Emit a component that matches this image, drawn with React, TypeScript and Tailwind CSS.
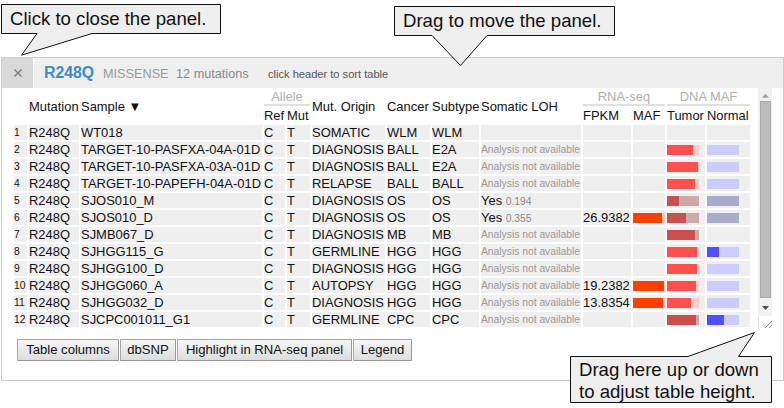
import React from "react";

type Bar = [number, boolean?];
interface Row {
  sample: string;
  origin: string;
  cancer: string;
  subtype: string;
  loh?: string;
  fpkm?: string;
  maf?: number;
  tumor?: Bar;
  normal?: Bar;
}

const rows: Row[] = [
  { sample: "WT018", origin: "SOMATIC", cancer: "WLM", subtype: "WLM", loh: "" },
  { sample: "TARGET-10-PASFXA-04A-01D", origin: "DIAGNOSIS", cancer: "BALL", subtype: "E2A", tumor: [26], normal: [0] },
  { sample: "TARGET-10-PASFXA-03A-01D", origin: "DIAGNOSIS", cancer: "BALL", subtype: "E2A", tumor: [31], normal: [0] },
  { sample: "TARGET-10-PAPEFH-04A-01D", origin: "RELAPSE", cancer: "BALL", subtype: "BALL", tumor: [28], normal: [0] },
  { sample: "SJOS010_M", origin: "DIAGNOSIS", cancer: "OS", subtype: "OS", loh: "0.194", tumor: [12, true], normal: [0, true] },
  { sample: "SJOS010_D", origin: "DIAGNOSIS", cancer: "OS", subtype: "OS", loh: "0.355", fpkm: "26.9382", maf: 29, tumor: [19, true], normal: [0, true] },
  { sample: "SJMB067_D", origin: "DIAGNOSIS", cancer: "MB", subtype: "MB", tumor: [28, true] },
  { sample: "SJHGG115_G", origin: "GERMLINE", cancer: "HGG", subtype: "HGG", tumor: [30], normal: [12] },
  { sample: "SJHGG100_D", origin: "DIAGNOSIS", cancer: "HGG", subtype: "HGG", tumor: [30], normal: [0] },
  { sample: "SJHGG060_A", origin: "AUTOPSY", cancer: "HGG", subtype: "HGG", fpkm: "19.2382", maf: 31, tumor: [29], normal: [0] },
  { sample: "SJHGG032_D", origin: "DIAGNOSIS", cancer: "HGG", subtype: "HGG", fpkm: "13.8354", maf: 30, tumor: [24], normal: [0] },
  { sample: "SJCPC001011_G1", origin: "GERMLINE", cancer: "CPC", subtype: "CPC", tumor: [29, true], normal: [17] },
];

const columns =
  "grid grid-cols-[13px_50px_181px_21px_23px_73px_43px_47px_100px_48px_32px_38px_43px] gap-x-[2px]";

function Cell({ children, className = "" }: { children?: React.ReactNode; className?: string }) {
  return (
    <div className={`h-[15px] overflow-visible whitespace-nowrap bg-[#efefef] leading-[15px] ${className}`}>
      {children}
    </div>
  );
}

function Meter({ fill, track, value }: { fill: string; track: string; value: number }) {
  return (
    <div className={`mt-[3px] h-[10px] w-[32px] ${track}`}>
      <div className={`h-full ${fill}`} style={{ width: value }} />
    </div>
  );
}

function TumorCell({ bar }: { bar?: Bar }) {
  return (
    <Cell className="flex">
      {bar && (
        <Meter
          value={bar[0]}
          fill={bar[1] ? "bg-[#cb4f4f]" : "bg-[#ff4f4f]"}
          track={bar[1] ? "bg-[#ccaaaa]" : "bg-[#ffcccc]"}
        />
      )}
    </Cell>
  );
}

function NormalCell({ bar }: { bar?: Bar }) {
  return (
    <Cell className="flex">
      {bar && <Meter value={bar[0]} fill="bg-[#4f4fff]" track={bar[1] ? "bg-[#aaaacc]" : "bg-[#ccccff]"} />}
    </Cell>
  );
}

function LohCell({ loh }: { loh?: string }) {
  if (loh === "") return <Cell />;
  return (
    <Cell>
      {loh ? (
        <>
          Yes <span className="text-[10.3px] text-[#888]">{loh}</span>
        </>
      ) : (
        <span className="block text-[10.3px] text-[#999]">Analysis not available</span>
      )}
    </Cell>
  );
}

function Group({ title, span, children }: { title: string; span: string; children: React.ReactNode }) {
  return (
    <div className={`${span} flex flex-col`}>
      <div className="h-[17px] border-b-2 border-[#e0e0e0] text-center leading-[15px] text-[#b0b0b0]">{title}</div>
      <div className="flex h-[19px] gap-[2px] leading-[19px]">{children}</div>
    </div>
  );
}

function Button({ width, children }: { width: string; children: React.ReactNode }) {
  return (
    <button
      className={`${width} h-[22px] whitespace-nowrap rounded-[1px] border border-[#a6a6a6] border-b-[#999] border-r-[#999] bg-linear-to-b from-[#f5f5f5] to-[#dddddd] p-0 text-center text-[13.1px] leading-[20px]`}
    >
      {children}
    </button>
  );
}

function Callouts() {
  return (
    <>
      <svg className="pointer-events-none absolute left-0 top-0" width="784" height="408" fill="#eeeeee" stroke="#111">
        <path d="M1.5 4.5H220.5V33.5H92L21.5 55.2L37 33.5H1.5Z" />
        <path d="M394.5 6.5H614.5V35.5H487L460.5 65.5L432 35.5H394.5Z" />
        <path d="M570.5 356.5H688L754.5 332.5L738.5 356.5H771.5V402.5H570.5Z" />
      </svg>
      <div className="absolute left-[10px] top-[8px] whitespace-nowrap text-[18.6px] leading-[22px]">Click to close the panel.</div>
      <div className="absolute left-[403px] top-[10px] whitespace-nowrap text-[18.6px] leading-[22px]">Drag to move the panel.</div>
      <div className="absolute left-[579px] top-[359px] whitespace-nowrap text-[18.6px] leading-[22px]">
        Drag here up or down
        <br />
        to adjust table height.
      </div>
    </>
  );
}

export default function App() {
  return (
    <div className="relative h-[408px] w-[784px] overflow-hidden bg-white font-['Liberation_Sans',Arial,sans-serif] text-[12.95px] text-[#111]">
      <div className="pl-px pt-[57px]">
        <section className="flex h-[324px] w-[783px] flex-col border border-[#cccccc]">
          <header className="flex h-[30px] shrink-0 items-center bg-[#efefef]">
            <div className="flex h-full w-[31px] items-center justify-center bg-[#d9d9d9]">
              <svg width="8" height="8" stroke="#777" strokeWidth="1.2">
                <path d="M.5 .5L7.5 7.5M7.5 .5L.5 7.5" />
              </svg>
            </div>
            <div className="h-full w-px bg-white" />
            <div className="flex items-baseline whitespace-nowrap pl-[10px]">
              <b className="w-[59px] text-[15.8px] text-[#408acb]">R248Q</b>
              <span className="w-[73px] text-[12.7px] text-[#999]">MISSENSE</span>
              <span className="w-[92px] text-[12.7px] text-[#888]">12 mutations</span>
              <span className="text-[11.1px] text-[#555]">click header to sort table</span>
            </div>
          </header>
          <div className="flex h-[241px] shrink-0 pl-[12px]">
            <div className="w-[744px] shrink-0">
              <div className={`${columns} h-[37px] whitespace-nowrap pt-[1px] leading-[35px]`}>
                <div />
                <div>Mutation</div>
                <div>Sample ▼</div>
                <Group title="Allele" span="col-span-2">
                  <div className="w-[21px]">Ref</div>
                  <div className="w-[23px]">Mut</div>
                </Group>
                <div>Mut. Origin</div>
                <div>Cancer</div>
                <div>Subtype</div>
                <div>Somatic LOH</div>
                <Group title="RNA-seq" span="col-span-2">
                  <div className="w-[48px]">FPKM</div>
                  <div className="w-[32px]">MAF</div>
                </Group>
                <Group title="DNA MAF" span="col-span-2">
                  <div className="w-[38px]">Tumor</div>
                  <div className="w-[43px]">Normal</div>
                </Group>
              </div>
              <div className="flex flex-col gap-[2px]">
                {rows.map((r, i) => (
                  <div key={r.sample} className={columns}>
                    <Cell className="text-[10.3px]">{i + 1}</Cell>
                    <Cell>R248Q</Cell>
                    <Cell>{r.sample}</Cell>
                    <Cell>C</Cell>
                    <Cell>T</Cell>
                    <Cell>{r.origin}</Cell>
                    <Cell>{r.cancer}</Cell>
                    <Cell>{r.subtype}</Cell>
                    <LohCell loh={r.loh} />
                    <Cell>{r.fpkm}</Cell>
                    <Cell className="flex">
                      {r.maf && <Meter value={r.maf} fill="bg-[#f94000]" track="bg-[#ffc6aa]" />}
                    </Cell>
                    <TumorCell bar={r.tumor} />
                    <NormalCell bar={r.normal} />
                  </div>
                ))}
              </div>
            </div>
            <div className="flex w-[14px] flex-col">
              <div className="flex h-[228px] flex-col items-center bg-[#f1f1f1]">
                <svg width="14" height="13" fill="#a0a0a0">
                  <path d="M4 9.7L7.5 5.7L11 9.7Z" />
                </svg>
                <div className="h-[197px] w-[11px] border border-[#aaa] bg-[#bcbcbc]" />
                <svg width="14" height="18" fill="#505050">
                  <path d="M4 8H11L7.5 12Z" />
                </svg>
              </div>
              <svg className="border-l border-[#ddd]" width="14" height="13" stroke="#888">
                <path d="M6 12L13 5M10 12L13 9" />
              </svg>
            </div>
          </div>
          <div className="flex gap-px pl-[15px] pt-[10px]">
            <Button width="w-[102px]">Table columns</Button>
            <Button width="w-[56px]">dbSNP</Button>
            <Button width="w-[175px]">Highlight in RNA-seq panel</Button>
            <Button width="w-[59px]">Legend</Button>
          </div>
        </section>
      </div>
      <Callouts />
    </div>
  );
}
